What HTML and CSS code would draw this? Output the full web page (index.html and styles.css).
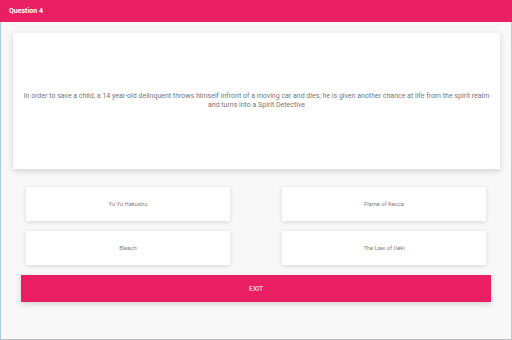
FILE: index.html
```html
<!DOCTYPE html>
<html>
<head>
<meta charset="utf-8">
<link rel="stylesheet" href="styles.css">
</head>
<body>
<header class="bar">Question 4</header>
<main class="content">
  <section class="question-card">
    <p class="question-text">In order to save a child, a 14 year-old delinquent throws himself infront of a moving car and dies; he is given another chance at life from the spirit realm and turns into a Spirit Detective</p>
  </section>
  <div class="answers">
    <button class="answer">Yu Yu Hakusho</button>
    <button class="answer">Flame of Recca</button>
    <button class="answer">Bleach</button>
    <button class="answer">The Law of Ueki</button>
  </div>
  <button class="exit">EXIT</button>
</main>
</body>
</html>
```
FILE: styles.css
```css
* { box-sizing: border-box; }
html, body {
  margin: 0;
  padding: 0;
  width: 512px;
  height: 340px;
  overflow: hidden;
  font-family: Roboto, "Liberation Sans", sans-serif;
  background: #f8f8f8;
}
.bar {
  height: 22px;
  background: #e91e63;
  color: #fff;
  font-weight: 700;
  font-size: 7px;
  line-height: 22px;
  padding-left: 9px;
}
.content {
  height: 318px;
  border-left: 1px solid #a8cce0;
  border-right: 1px solid #c6cacd;
  border-bottom: 1px solid #b2bfc9;
  padding-top: 11px;
  background: #f8f8f8;
}
.question-card {
  margin: 0 11px 0 12px;
  height: 136px;
  background: #fff;
  box-shadow: 0 2px 6px rgba(0,0,0,0.16);
  display: flex;
  align-items: center;
  justify-content: center;
  padding: 0 4px;
}
.question-text {
  margin: 0;
  text-align: center;
  font-size: 7px;
  line-height: 9px;
  color: #777;
}
.answers {
  margin-top: 18px;
  padding-left: 25px;
  display: grid;
  grid-template-columns: 204px 204px;
  grid-auto-rows: 34px;
  column-gap: 52px;
  row-gap: 10px;
}
.answer {
  border: 0;
  background: #fff;
  box-shadow: 0 1px 4px rgba(0,0,0,0.14);
  font-family: Roboto, "Liberation Sans", sans-serif;
  font-size: 5.8px;
  color: #808080;
  padding: 0;
}
.exit {
  display: block;
  margin: 10px 0 0 20px;
  width: 470px;
  height: 27px;
  border: 0;
  background: #e91e63;
  color: #fff;
  font-family: Roboto, "Liberation Sans", sans-serif;
  font-size: 6.8px;
  box-shadow: 0 2px 6px rgba(0,0,0,0.16);
  padding: 0;
}
```
